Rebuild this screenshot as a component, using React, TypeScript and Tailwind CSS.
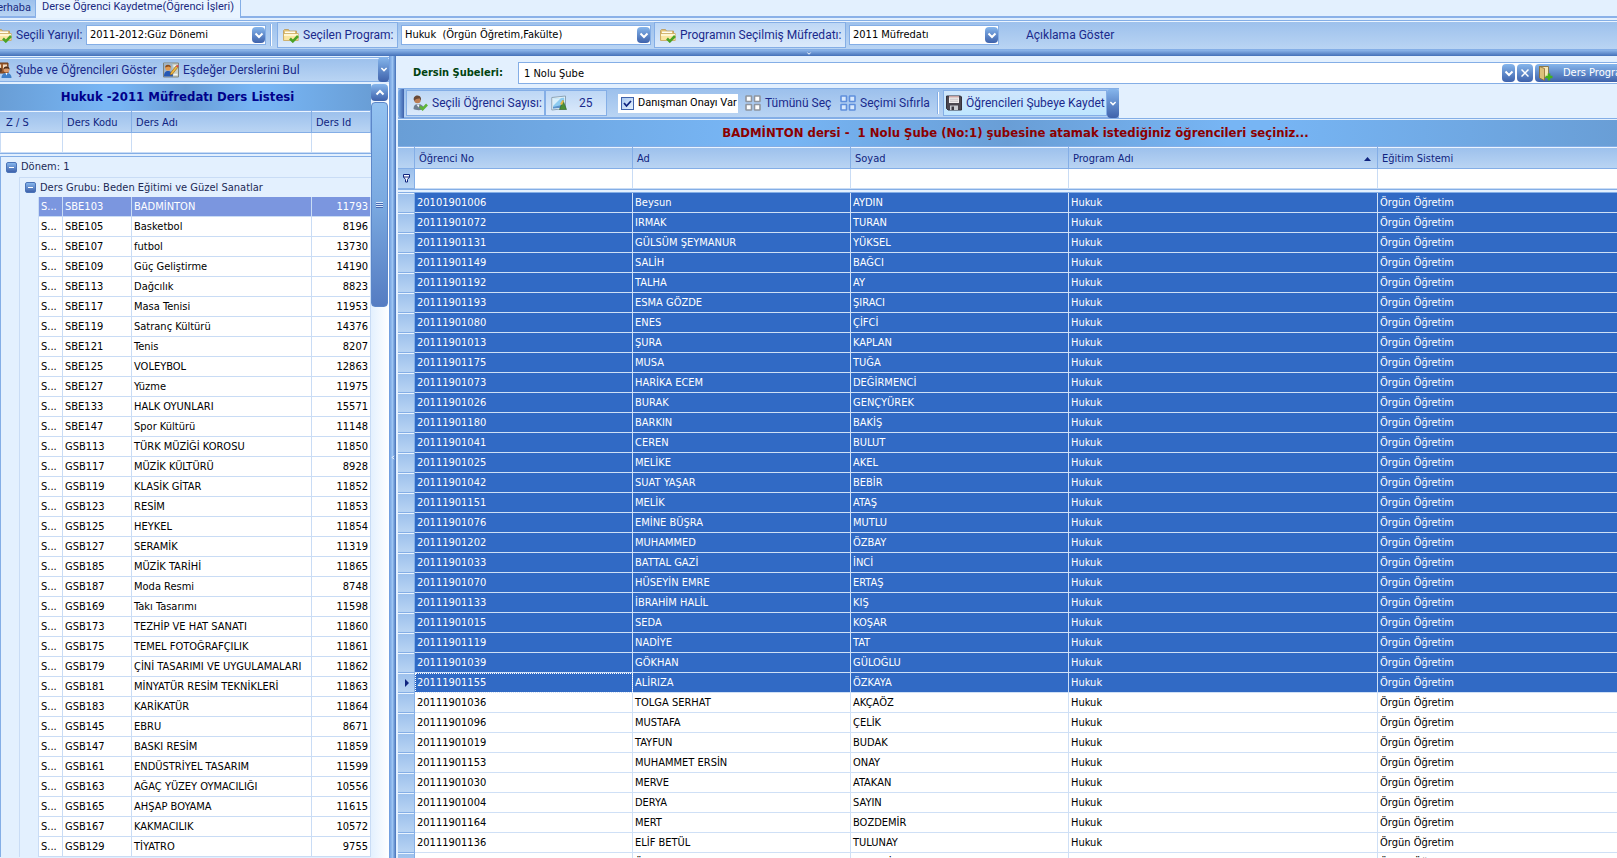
import type { ReactNode } from 'react';

const courses = [
    ['SBE103', 'BADMİNTON', '11793'],
    ['SBE105', 'Basketbol', '8196'],
    ['SBE107', 'futbol', '13730'],
    ['SBE109', 'Güç Geliştirme', '14190'],
    ['SBE113', 'Dağcılık', '8823'],
    ['SBE117', 'Masa Tenisi', '11953'],
    ['SBE119', 'Satranç Kültürü', '14376'],
    ['SBE121', 'Tenis', '8207'],
    ['SBE125', 'VOLEYBOL', '12863'],
    ['SBE127', 'Yüzme', '11975'],
    ['SBE133', 'HALK OYUNLARI', '15571'],
    ['SBE147', 'Spor Kültürü', '11148'],
    ['GSB113', 'TÜRK MÜZİĞİ KOROSU', '11850'],
    ['GSB117', 'MÜZİK KÜLTÜRÜ', '8928'],
    ['GSB119', 'KLASİK GİTAR', '11852'],
    ['GSB123', 'RESİM', '11853'],
    ['GSB125', 'HEYKEL', '11854'],
    ['GSB127', 'SERAMİK', '11319'],
    ['GSB185', 'MÜZİK TARİHİ', '11865'],
    ['GSB187', 'Moda Resmi', '8748'],
    ['GSB169', 'Takı Tasarımı', '11598'],
    ['GSB173', 'TEZHİP VE HAT SANATI', '11860'],
    ['GSB175', 'TEMEL FOTOĞRAFÇILIK', '11861'],
    ['GSB179', 'ÇİNİ TASARIMI VE UYGULAMALARI', '11862'],
    ['GSB181', 'MİNYATÜR RESİM TEKNİKLERİ', '11863'],
    ['GSB183', 'KARİKATÜR', '11864'],
    ['GSB145', 'EBRU', '8671'],
    ['GSB147', 'BASKI RESİM', '11859'],
    ['GSB161', 'ENDÜSTRİYEL TASARIM', '11599'],
    ['GSB163', 'AĞAÇ YÜZEY OYMACILIĞI', '10556'],
    ['GSB165', 'AHŞAP BOYAMA', '11615'],
    ['GSB167', 'KAKMACILIK', '10572'],
    ['GSB129', 'TİYATRO', '9755'],
];

const students = [
    ['20101901006', 'Beysun', 'AYDIN'],
    ['20111901072', 'IRMAK', 'TURAN'],
    ['20111901131', 'GÜLSÜM ŞEYMANUR', 'YÜKSEL'],
    ['20111901149', 'SALİH', 'BAĞCI'],
    ['20111901192', 'TALHA', 'AY'],
    ['20111901193', 'ESMA GÖZDE', 'ŞIRACI'],
    ['20111901080', 'ENES', 'ÇİFCİ'],
    ['20111901013', 'ŞURA', 'KAPLAN'],
    ['20111901175', 'MUSA', 'TUĞA'],
    ['20111901073', 'HARİKA ECEM', 'DEĞİRMENCİ'],
    ['20111901026', 'BURAK', 'GENÇYÜREK'],
    ['20111901180', 'BARKIN', 'BAKİŞ'],
    ['20111901041', 'CEREN', 'BULUT'],
    ['20111901025', 'MELİKE', 'AKEL'],
    ['20111901042', 'SUAT YAŞAR', 'BEBİR'],
    ['20111901151', 'MELİK', 'ATAŞ'],
    ['20111901076', 'EMİNE BÜŞRA', 'MUTLU'],
    ['20111901202', 'MUHAMMED', 'ÖZBAY'],
    ['20111901033', 'BATTAL GAZİ', 'İNCİ'],
    ['20111901070', 'HÜSEYİN EMRE', 'ERTAŞ'],
    ['20111901133', 'İBRAHİM HALİL', 'KIŞ'],
    ['20111901015', 'SEDA', 'KOŞAR'],
    ['20111901119', 'NADİYE', 'TAT'],
    ['20111901039', 'GÖKHAN', 'GÜLOĞLU'],
    ['20111901155', 'ALİRIZA', 'ÖZKAYA'],
    ['20111901036', 'TOLGA SERHAT', 'AKÇAÖZ'],
    ['20111901096', 'MUSTAFA', 'ÇELİK'],
    ['20111901019', 'TAYFUN', 'BUDAK'],
    ['20111901153', 'MUHAMMET ERSİN', 'ONAY'],
    ['20111901030', 'MERVE', 'ATAKAN'],
    ['20111901004', 'DERYA', 'SAYIN'],
    ['20111901164', 'MERT', 'BOZDEMİR'],
    ['20111901136', 'ELİF BETÜL', 'TULUNAY'],
    ['20111901088', 'ÖMER', 'AKDEMİR'],
];

const SELECTED = 25;
const ACTIVE = 24;

const bar = 'bg-linear-to-b from-[#9cc0ec] to-[#b9d4f3]';
const band = 'bg-[linear-gradient(to_right,#699ed6_0%,#77b5f4_28%,#77b5f4_32%,#699ed6_50%,#77b5f4_68%,#77b5f4_72%,#699ed6_100%)]';
const glossy = 'bg-linear-to-b from-[#86b6ec] to-[#3f62ab] rounded-sm';
const headCell = 'h-[23px] px-0 pt-0.5 pb-0 border-t border-b border-r border-[#84aee6] shadow-[inset_0_1px_0_#eaf4ff] bg-linear-to-b from-[#9cc0ec] to-[#b9d4f3] text-left font-normal text-[#10247f]';

function Chevron({ className = '' }: { className?: string }) {
    return (
        <svg viewBox="0 0 10 7" className={`w-[10px] h-[7px] ${className}`} fill="none" stroke="white" strokeWidth="2">
            <path d="M1.5 1.5 5 5l3.5-3.5" />
        </svg>
    );
}

function FolderIcon() {
    return (
        <svg viewBox="0 0 16 16" className="w-4 h-4 shrink-0">
            <path d="M.5 13V3.500l1-1h4l1 1.500h7v9z" fill="#e3c271" stroke="#b9985a" strokeWidth=".8" />
            <path d="M2 4.500h10V7H2z" fill="#fffdf2" />
            <path d="M.6 13.500V6.500H15.200V13.500z" fill="#fbe6a2" stroke="#c9a860" strokeWidth=".8" />
            <path d="M1 7h14v2H1z" fill="#fff6d2" />
            <path d="m7 11.500 2.800 2.800L15 9" fill="none" stroke="#4ba326" strokeWidth="2.600" />
        </svg>
    );
}

function GroupIcon() {
    return (
        <svg viewBox="0 0 16 16" className="w-4 h-4 shrink-0">
            <path d="M0 1h12v10H0z" fill="#9a5a2c" stroke="#6d3a18" />
            <path d="M1 2.500h4v4H1zM7 2.500h4v4H7z" fill="#f1dcc2" />
            <circle cx="4" cy="8" r="2.200" fill="#5b3a24" />
            <circle cx="10.500" cy="7.500" r="3" fill="#d99a6c" />
            <path d="M7.500 7.500a3 3 0 0 1 6 0l-1.500-1h-3z" fill="#4a2b18" />
            <path d="M5.500 16c0-3.500 2-5 5-5s5 1.500 5 5z" fill="#3f7fc8" />
            <path d="m9.500 11 1 2.500 1-2.500z" fill="white" />
        </svg>
    );
}

function CardIcon() {
    return (
        <svg viewBox="0 0 16 16" className="w-4 h-4 shrink-0">
            <path d="M.5 1h15v14H.5z" fill="#c9cfc6" stroke="#7f847c" />
            <path d="M1 1.500h8.500v13H1z" fill="#9fb4c8" />
            <circle cx="5" cy="5.800" r="2.800" fill="#e39a4e" />
            <path d="M2.200 5.500a2.800 2.800 0 0 1 5.600 0L5.500 4.500z" fill="#8a4d1e" />
            <path d="M1 14.500c0-4 1.500-5.500 4-5.500s5 1.500 5 5.500z" fill="#2458b4" />
            <path d="M10.500 4h3M10.500 12.500h4" stroke="#f4f6f2" strokeWidth="1.500" />
            <path d="m7.500 11 5.500-7 1.800 1.400L9.300 12.300 7.200 13z" fill="#f0b73e" stroke="#8c5f16" strokeWidth=".6" />
            <path d="m13 4 1-1.300 1.800 1.400-1 1.300z" fill="#d6484a" />
        </svg>
    );
}

function PersonIcon() {
    return (
        <svg viewBox="0 0 16 16" className="w-4 h-4 shrink-0">
            <path d="M1.500 14c0-3.500 1.500-5 4.500-5s6 2 6 5c-2 1.500-8.500 1.500-10.500 0z" fill="#6f7f92" />
            <path d="m4.500 9.500 2 3 1-3z" fill="#f3f6fa" />
            <circle cx="5.500" cy="5" r="3.300" fill="#bb7d55" />
            <path d="M1.800 5C1.200 1.800 3.500.2 5.700.4 8.500.5 9.500 3 8.900 5.500L7.500 3.200C5.500 4 3 3.500 2.800 6z" fill="#684a38" />
            <path d="m8 11.500 2.600 2.600L15 9.500" fill="none" stroke="#5fb43a" strokeWidth="2.600" />
        </svg>
    );
}

function PictureIcon() {
    return (
        <svg viewBox="0 0 16 16" className="w-4 h-4 shrink-0">
            <path d="M.8 2.500 14.500 1v12.500L.8 15z" fill="#eef5f9" stroke="#8aa3b5" />
            <path d="M2 3.800 13.300 2.600v9.800L2 13.600z" fill="#8ccbf0" />
            <path d="M2 3.800 10 3 2 11z" fill="#d8effb" />
            <path d="M2 13.600V12l9-2 2.300 2.400z" fill="#5c93c9" />
            <path d="m8.500 14.500 3.500-9 3.500 9z" fill="#4a8f37" stroke="#2c5f23" strokeWidth=".6" />
            <path d="m9 9 2.500-4 1.500 1-2 4z" fill="#e2b94a" />
        </svg>
    );
}

function GridIcon({ stroke, fill }: { stroke: string; fill: string }) {
    return (
        <svg viewBox="0 0 16 16" className="w-4 h-4 shrink-0" fill={fill} stroke={stroke} strokeWidth="1.600">
            <rect x="1" y="1" width="5.500" height="5.500" rx=".5" />
            <rect x="9.500" y="1" width="5.500" height="5.500" rx=".5" />
            <rect x="1" y="9.500" width="5.500" height="5.500" rx=".5" />
            <rect x="9.500" y="9.500" width="5.500" height="5.500" rx=".5" />
        </svg>
    );
}

function DiskIcon() {
    return (
        <svg viewBox="0 0 16 16" className="w-4 h-4 shrink-0">
            <path d="M.5 1h14l1 1v13H2L.5 13.500z" fill="#4b4750" stroke="#33303a" />
            <path d="M3 1h10v7H3z" fill="#f2eff0" />
            <path d="M3 1h10v1.500H3z" fill="#c9a3a3" />
            <path d="M4 4.200h8M4 6.200h8" stroke="#c4c0c4" />
            <path d="M4 10.500h8V15H4z" fill="#c9ccd2" />
            <path d="M5.500 11.500h2.500V15H5.500z" fill="#3a3740" />
        </svg>
    );
}

function DoorIcon() {
    return (
        <svg viewBox="0 0 16 16" className="w-4 h-4 shrink-0">
            <path d="M2.500 1.500h9v11h-9z" fill="#f7e8b6" stroke="#8a7a50" />
            <path d="M2.500 1.500 7.500 3.500v12L2.500 13z" fill="#dcc07a" stroke="#8a6d34" strokeWidth=".8" />
            <path d="M12 8.500v7M8.500 12h7" stroke="#45b01e" strokeWidth="2.600" />
        </svg>
    );
}

function Combo({ id, width, value }: { id: string; width: string; value: string }) {
    return (
        <div className={`relative h-5 shrink-0 ${width}`}>
            <select
                id={id}
                className="appearance-none w-full h-5 bg-white border border-[#84aee6] pl-[3px] pr-5 text-black text-[11px] leading-[18px] font-['DejaVu_Sans_Condensed','DejaVu_Sans',sans-serif] outline-none"
            >
                <option>{value}</option>
            </select>
            <span className={`absolute right-px top-0.5 w-[13px] h-4 flex items-center justify-center pointer-events-none ${glossy}`}>
                <Chevron />
            </span>
        </div>
    );
}

function LabelBox({ htmlFor, width, children }: { htmlFor: string; width: string; children: ReactNode }) {
    return (
        <label htmlFor={htmlFor} className={`h-[26px] shrink-0 flex items-center gap-1 pl-[5px] border border-[#84aee6] bg-linear-to-b from-[#bdd7f5] to-[#dceafb] ${width}`}>
            <FolderIcon />
            {children}
        </label>
    );
}

function Collapse() {
    return (
        <button aria-label="Daralt" className="w-[11px] h-[11px] shrink-0 flex items-center justify-center border border-[#4b74b8] rounded-xs bg-linear-to-b from-[#86b6ec] to-[#3f62ab]">
            <span className="w-[5px] h-px bg-white" />
        </button>
    );
}

function CourseList() {
    return (
        <div className="flex flex-1 min-h-0 overflow-hidden">
            <div className="w-[371px] shrink-0 bg-[#e3f0fe]">
                <h2 className={`h-[26px] pr-4 text-center leading-[25px] text-[13px] font-bold text-[#00008b] ${band}`}>
                    Hukuk -2011 Müfredatı Ders Listesi
                </h2>
                <table className="table-fixed w-full border-separate border-spacing-0 leading-[18px] whitespace-nowrap">
                    <colgroup>
                        <col className="w-5" />
                        <col className="w-[19px]" />
                        <col className="w-6" />
                        <col className="w-[69px]" />
                        <col />
                        <col className="w-[59px]" />
                    </colgroup>
                    <thead>
                        <tr>
                            <th colSpan={3} className={`${headCell} pl-1.5`}>Z / S</th>
                            <th className={`${headCell} pl-1`}>Ders Kodu</th>
                            <th className={`${headCell} pl-1`}>Ders Adı</th>
                            <th className={`${headCell} pl-1`}>Ders Id</th>
                        </tr>
                        <tr>
                            {[3, 1, 1, 1].map((span, i) => (
                                <td key={i} colSpan={span} className="h-5 p-0 bg-white border-b border-r border-[#c9dcf5] first:border-l">
                                    <input aria-label="Filtre" className="block w-full h-[19px] px-1 outline-none" />
                                </td>
                            ))}
                        </tr>
                        <tr>
                            <td colSpan={6} className="h-1 p-0 border-y border-[#84aee6]" />
                        </tr>
                    </thead>
                    <tbody>
                        <tr>
                            <td colSpan={6} className="h-5 p-0 border-l border-[#84aee6] text-[#1c2a56]">
                                <div className="flex items-center gap-1 pl-[5px]">
                                    <Collapse />
                                    <span>Dönem: 1</span>
                                </div>
                            </td>
                        </tr>
                        <tr>
                            <td className="h-5 p-0 border-l border-r border-l-[#84aee6] border-r-[#c9dcf5]" />
                            <td colSpan={5} className="h-5 p-0 border-t border-[#c9dcf5] text-[#1c2a56]">
                                <div className="flex items-center gap-1 pl-[5px]">
                                    <Collapse />
                                    <span>Ders Grubu: Beden Eğitimi ve Güzel Sanatlar</span>
                                </div>
                            </td>
                        </tr>
                        {courses.map(([code, name, id], i) => {
                            const cell = `h-5 p-0 pl-0.5 border-b border-r border-[#c9dcf5] ${i === 0 ? 'bg-[#7b96df] text-white' : 'bg-white text-black'}`;
                            return (
                                <tr key={code}>
                                    <td className="h-5 p-0 border-l border-r border-l-[#84aee6] border-r-[#c9dcf5]" />
                                    <td className="h-5 p-0 border-r border-[#c9dcf5]" />
                                    <td className={cell}>S...</td>
                                    <td className={cell}>{code}</td>
                                    <td className={cell}>{name}</td>
                                    <td className={`${cell} text-right pr-0.5`}>{id}</td>
                                </tr>
                            );
                        })}
                    </tbody>
                </table>
            </div>
            <div className="flex-1 flex flex-col bg-linear-to-r from-[#e3f0fe] to-white">
                <button aria-label="Yukarı" className={`h-[17px] w-[17px] flex items-center justify-center ${glossy}`}>
                    <Chevron className="rotate-180" />
                </button>
                <div className="mt-px h-[205px] w-[17px] rounded-sm border border-[#5c86c8] bg-linear-to-b from-[#93c2f1] via-[#7aa9e0] to-[#557cc2] flex flex-col items-center justify-center gap-px">
                    <span className="w-[7px] h-px bg-[#d6e8fc] shadow-[0_1px_0_#4467b0]" />
                    <span className="w-[7px] h-px bg-[#d6e8fc] shadow-[0_1px_0_#4467b0]" />
                    <span className="w-[7px] h-px bg-[#d6e8fc] shadow-[0_1px_0_#4467b0]" />
                </div>
            </div>
        </div>
    );
}

function StudentTable() {
    return (
        <table className="table-fixed w-full border-separate border-spacing-0 leading-[18px] whitespace-nowrap">
            <colgroup>
                <col className="w-[17px]" />
                <col className="w-[218px]" />
                <col className="w-[218px]" />
                <col className="w-[218px]" />
                <col className="w-[309px]" />
                <col />
            </colgroup>
            <thead>
                <tr>
                    <th className={headCell} />
                    <th className={`${headCell} pl-1`}>Öğrenci No</th>
                    <th className={`${headCell} pl-1`}>Ad</th>
                    <th className={`${headCell} pl-1`}>Soyad</th>
                    <th className={`${headCell} pl-1`}>
                        <div className="flex items-center justify-between pr-1.5">
                            Program Adı
                            <svg viewBox="0 0 7 4" className="w-[7px] h-1" fill="#10247f">
                                <path d="M3.500 0 7 4H0z" />
                            </svg>
                        </div>
                    </th>
                    <th className={`${headCell} pl-1 last:border-r-0`}>Eğitim Sistemi</th>
                </tr>
                <tr>
                    <td className={`h-5 p-0 border-b border-r border-[#84aee6] ${bar}`}>
                        <svg viewBox="0 0 9 9" className="mx-auto w-[9px] h-[9px]" fill="white" stroke="#10247f">
                            <path d="M1.500.5h6v2.500l-2 2.500V8h-2V5.500L1.500 3zM1.500 3h6" />
                        </svg>
                    </td>
                    {[1, 2, 3, 4, 5].map((i) => (
                        <td key={i} className="h-5 p-0 bg-white border-b border-r border-[#c9dcf5] last:border-r-0">
                            <input aria-label="Filtre" className="block w-full h-[19px] px-1 outline-none" />
                        </td>
                    ))}
                </tr>
                <tr>
                    <td colSpan={6} className="h-1 p-0 border-y border-[#84aee6]" />
                </tr>
            </thead>
            <tbody>
                {students.map(([no, name, surname], i) => {
                    const cell = `h-5 p-0 pl-0.5 border-b border-r border-[#cfe0f6] last:border-r-0 ${i < SELECTED ? 'bg-[#316ac5] text-white' : 'bg-white text-black'}`;
                    return (
                        <tr key={no}>
                            <td className={`h-5 p-0 border-b border-r border-[#84aee6] shadow-[inset_0_1px_0_#eaf4ff] ${bar}`}>
                                {i === ACTIVE && (
                                    <svg viewBox="0 0 4 8" className="ml-[7px] w-1 h-2" fill="#10247f">
                                        <path d="M0 0 4 4 0 8z" />
                                    </svg>
                                )}
                            </td>
                            <td className={`${cell} ${i === ACTIVE ? 'outline-1 -outline-offset-1 outline-dotted outline-white' : ''}`}>{no}</td>
                            <td className={cell}>{name}</td>
                            <td className={cell}>{surname}</td>
                            <td className={cell}>Hukuk</td>
                            <td className={cell}>Örgün Öğretim</td>
                        </tr>
                    );
                })}
            </tbody>
        </table>
    );
}

export default function App() {
    return (
        <div className="h-screen overflow-hidden flex flex-col bg-[#e3f0fe] text-[11px] font-['DejaVu_Sans_Condensed','DejaVu_Sans',sans-serif]">
            <nav className="h-[18px] shrink-0 flex border-b-2 border-[#8bb1e8] text-[#1a2a80] leading-3 font-['Roboto',sans-serif]">
                <button className={`w-9 h-4 flex justify-end items-center pr-1 border-r border-[#84aee6] ${bar}`}>erhaba</button>
                <button className="h-[18px] w-[205px] text-center pb-1 bg-[#e9f4ff] border-r border-[#84aee6] whitespace-nowrap">
                    Derse Öğrenci Kaydetme(Öğrenci İşleri)
                </button>
            </nav>

            <div className={`mt-0.5 h-[30px] shrink-0 flex items-center border-t border-b border-[#84aee6] shadow-[inset_0_1px_0_#eaf4ff] text-[12px] font-['Roboto',sans-serif] text-[#1a2a8c] whitespace-nowrap overflow-hidden ${bar}`}>
                <label htmlFor="yariyil" className="w-[86px] shrink-0 flex items-center gap-1 -ml-1 mr-1">
                    <FolderIcon />
                    Seçili Yarıyıl:
                </label>
                <Combo id="yariyil" width="w-[180px]" value="2011-2012:Güz Dönemi" />
                <span className="mx-[5px] w-px h-[22px] bg-white shadow-[-1px_0_0_#84aee6]" />
                <div className="flex items-center gap-[3px]">
                    <LabelBox htmlFor="program" width="w-[121px]">Seçilen Program:</LabelBox>
                    <Combo id="program" width="w-[250px]" value={'Hukuk\u00a0 (Örgün Öğretim,Fakülte)'} />
                    <LabelBox htmlFor="mufredat" width="w-[192px]">Programın Seçilmiş Müfredatı:</LabelBox>
                    <Combo id="mufredat" width="w-[150px]" value="2011 Müfredatı" />
                </div>
                <button className="ml-[27px]">Açıklama Göster</button>
            </div>
            <div className="h-1.5 shrink-0 flex items-center justify-center bg-linear-to-b from-[#8db6ea] to-[#4470b8]">
                <Chevron className="scale-50" />
            </div>

            <div className="flex-1 min-h-0 flex">
                <aside className="w-[389px] shrink-0 flex flex-col">
                    <div className={`mt-px mb-0.5 h-[25px] shrink-0 flex items-center border-t border-b border-[#84aee6] shadow-[inset_0_1px_0_#eaf4ff] text-[12px] font-['Roboto',sans-serif] text-[#1a2a8c] whitespace-nowrap ${bar}`}>
                        <button className="w-[167px] flex items-center gap-1 -ml-1">
                            <GroupIcon />
                            Şube ve Öğrencileri Göster
                        </button>
                        <button className="flex items-center gap-1">
                            <CardIcon />
                            Eşdeğer Derslerini Bul
                        </button>
                        <button aria-label="Diğer" className={`ml-auto w-[11px] h-[25px] flex items-center justify-center ${glossy}`}>
                            <Chevron className="scale-75" />
                        </button>
                    </div>
                    <CourseList />
                </aside>
                <div className="w-[7px] shrink-0 flex items-center justify-center bg-linear-to-r from-[#6c9add] via-[#9cc4f2] to-[#4470b8]">
                    <Chevron className="scale-50 rotate-90 shrink-0" />
                </div>

                <main className="flex-1 min-w-0 flex flex-col pl-0.5">
                    <div className="h-8 shrink-0 flex items-center pt-0.5 pl-[15px]">
                        <label htmlFor="sube" className="w-[105px] shrink-0 font-bold text-[11px] text-[#00420f] whitespace-nowrap">
                            Dersin Şubeleri:
                        </label>
                        <div className="flex-1 h-[22px] flex items-center gap-0.5 bg-white border-y border-l border-[#84aee6]">
                            <input id="sube" defaultValue="1 Nolu Şube" className="flex-1 min-w-0 h-5 pl-[5px] outline-none text-black" />
                            <button aria-label="Aç" className={`w-[13px] h-[18px] flex items-center justify-center ${glossy}`}>
                                <Chevron />
                            </button>
                            <button aria-label="Temizle" className={`w-4 h-[18px] flex items-center justify-center ${glossy}`}>
                                <svg viewBox="0 0 8 8" className="w-2 h-2" stroke="white" strokeWidth="1.500">
                                    <path d="m.5.5 7 7M7.500.5l-7 7" />
                                </svg>
                            </button>
                            <button className="w-[82px] h-[18px] flex items-center gap-2.5 pl-0.5 overflow-hidden whitespace-nowrap text-white rounded-l-sm bg-linear-to-b from-[#86b6ec] to-[#3f62ab]">
                                <DoorIcon />
                                Ders Programı
                            </button>
                        </div>
                    </div>

                    <div className={`w-[721px] h-[30px] shrink-0 flex items-center border-t border-b border-[#84aee6] text-[12px] font-['Roboto',sans-serif] text-[#1a2a8c] whitespace-nowrap ${bar}`}>
                        <span className="w-1.5 h-[29px] shrink-0 mr-0.5 rounded-l-sm bg-linear-to-r from-[#7fb0ea] to-[#3f62ab]" />
                        <button className="w-[139px] h-[26px] shrink-0 flex items-center gap-1 pl-[5px] border border-[#84aee6] bg-linear-to-b from-[#bdd7f5] to-[#dceafb]">
                            <PersonIcon />
                            Seçili Öğrenci Sayısı:
                        </button>
                        <button className="w-[62px] h-[26px] shrink-0 flex items-center gap-3 pl-[5px] border border-[#84aee6] bg-linear-to-b from-[#bdd7f5] to-[#dceafb]">
                            <PictureIcon />
                            25
                        </button>
                        <label className="ml-[11px] w-[120px] h-[19px] shrink-0 flex items-center gap-1 pl-[3px] bg-white text-black text-[11px]">
                            <span className="relative w-[13px] h-[13px] shrink-0">
                                <input type="checkbox" defaultChecked className="appearance-none block w-[13px] h-[13px] border border-[#3f62ab] bg-linear-to-br from-[#a9c8f0] to-[#e8f2fd]" />
                                <svg viewBox="0 0 13 13" className="absolute inset-0 pointer-events-none" fill="none" stroke="#10247f" strokeWidth="1.800">
                                    <path d="m3 6 2.500 3L10 4" />
                                </svg>
                            </span>
                            Danışman Onayı Var
                        </label>
                        <button className="ml-[7px] w-[95px] flex items-center gap-1 shrink-0">
                            <GridIcon stroke="#8f959e" fill="#ffffff" />
                            Tümünü Seç
                        </button>
                        <button className="w-[94px] flex items-center gap-1 shrink-0">
                            <GridIcon stroke="#5f8fdc" fill="#d9e9fc" />
                            Seçimi Sıfırla
                        </button>
                        <span className="mx-1 w-px h-[22px] bg-white shadow-[-1px_0_0_#84aee6]" />
                        <button className="w-[164px] h-[26px] shrink-0 flex items-center gap-1 pl-0.5 border border-[#84aee6] bg-linear-to-b from-[#cfe6fc] to-[#bfe6ff]">
                            <DiskIcon />
                            Öğrencileri Şubeye Kaydet
                        </button>
                        <button aria-label="Diğer" className={`ml-auto w-3 h-[29px] flex items-center justify-center ${glossy}`}>
                            <Chevron className="scale-75" />
                        </button>
                    </div>

                    <div className="border-t border-[#84aee6] pt-px">
                        <h2 className={`h-[26px] text-center leading-[18px] pt-1 pl-4 text-[13px] font-bold text-[#8b0000] whitespace-pre ${band}`}>
                            {'BADMİNTON dersi -  1 Nolu Şube (No:1) şubesine atamak istediğiniz öğrencileri seçiniz...'}
                        </h2>
                    </div>
                    <StudentTable />
                </main>
            </div>
        </div>
    );
}
